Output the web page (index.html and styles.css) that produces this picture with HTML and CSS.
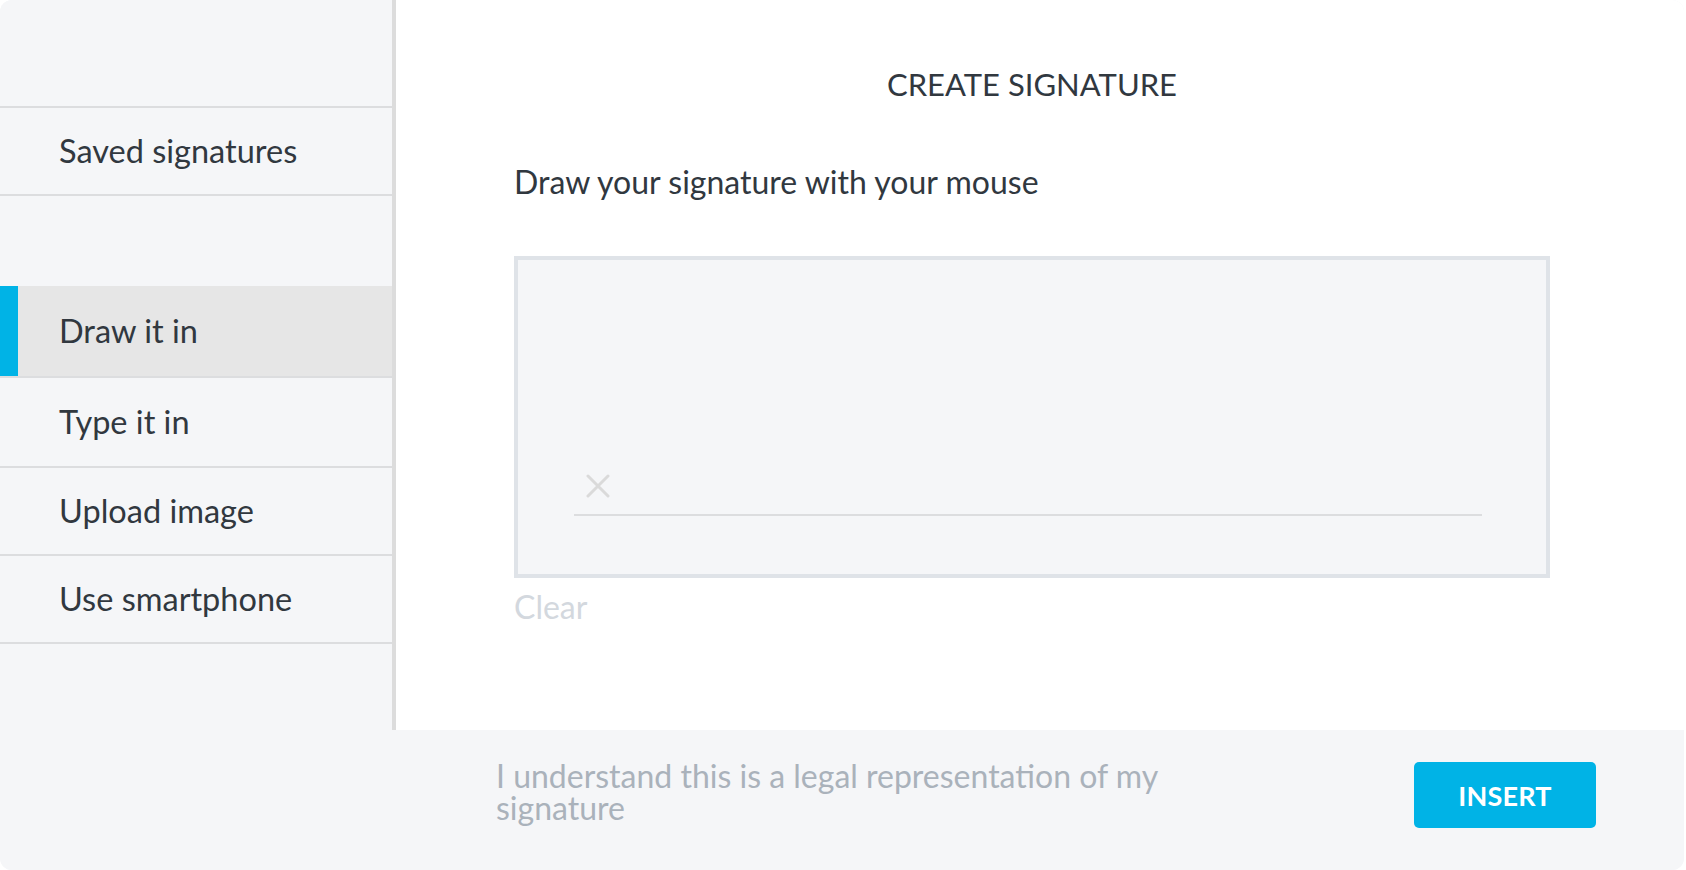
FILE: index.html
```html
<!DOCTYPE html>
<html lang="en">
<head>
<meta charset="utf-8">
<title>Create signature</title>
<link rel="stylesheet" href="styles.css">
</head>
<body>
<div class="card">
  <div class="content">
    <nav class="sidebar">
      <div class="side-head"></div>
      <div class="side-item">Saved signatures</div>
      <div class="side-gap"></div>
      <div class="side-item side-item--active">Draw it in</div>
      <div class="side-item side-item--mid">Type it in</div>
      <div class="side-item">Upload image</div>
      <div class="side-item">Use smartphone</div>
    </nav>
    <main class="main">
      <h1 class="title">CREATE SIGNATURE</h1>
      <p class="hint">Draw your signature with your mouse</p>
      <div class="pad">
        <div class="sig-line">
          <svg class="sig-x" width="24" height="24" viewBox="0 0 24 24" aria-hidden="true">
            <path d="M2 2 L22 22 M22 2 L2 22" stroke="#dadada" stroke-width="3" stroke-linecap="round" fill="none"/>
          </svg>
        </div>
      </div>
      <div class="clear">Clear</div>
    </main>
  </div>
  <footer class="footer">
    <p class="legal">I understand this is a legal representation of my signature</p>
    <button class="insert" type="button">INSERT</button>
  </footer>
</div>
</body>
</html>
```

FILE: styles.css
```css
* { box-sizing: border-box; }

html, body {
  margin: 0;
  padding: 0;
  background: #ffffff;
}

body {
  font-family: "Lato", "Open Sans", sans-serif;
  color: #31383f;
}

.card {
  width: 1684px;
  height: 870px;
  border-radius: 12px;
  overflow: hidden;
  display: grid;
  grid-template-rows: 730px 140px;
  background: #f5f6f8;
}

.content {
  display: flex;
  min-height: 0;
}

.sidebar {
  width: 396px;
  flex: 0 0 396px;
  background: #f5f6f8;
  border-right: 4px solid #dcdcdc;
  display: flex;
  flex-direction: column;
}

.side-head {
  height: 108px;
  border-bottom: 2px solid #dcdddf;
}

.side-gap {
  height: 90px;
}

.side-item {
  height: 88px;
  display: flex;
  align-items: center;
  padding-left: 59px;
  border-bottom: 2px solid #dcdddf;
  font-size: 32.5px;
  line-height: 40px;
  color: #31383f;
}

.side-item--active {
  height: 92px;
  background: #e6e6e6;
  box-shadow: inset 18px 0 0 #00b3e6;
}

.side-item--mid {
  height: 90px;
}

.main {
  flex: 1;
  background: #ffffff;
  padding-left: 118px;
  display: flex;
  flex-direction: column;
}

.title {
  width: 1036px;
  margin: 64px 0 0;
  font-size: 31px;
  line-height: 40px;
  font-weight: 400;
  text-align: center;
  color: #31383f;
}

.hint {
  margin: 58px 0 0;
  font-size: 32px;
  line-height: 40px;
  color: #31383f;
}

.pad {
  width: 1036px;
  height: 322px;
  margin-top: 54px;
  border: 4px solid #dfe3e8;
  background: #f5f6f8;
  display: flex;
  flex-direction: column;
  justify-content: flex-end;
  padding: 0 64px 58px 56px;
}

.sig-line {
  border-bottom: 2px solid #dcdddf;
  padding: 0 0 16px 12px;
  display: flex;
}

.sig-x {
  display: block;
}

.clear {
  margin-top: 9px;
  font-size: 32px;
  line-height: 40px;
  color: #d3d8de;
}

.footer {
  background: #f5f6f8;
  display: flex;
  align-items: flex-start;
  padding: 30px 88px 0 496px;
}

.legal {
  margin: 0;
  width: 720px;
  font-size: 32px;
  line-height: 32px;
  color: #aab2bb;
}

.insert {
  margin-left: auto;
  margin-top: 2px;
  width: 182px;
  height: 66px;
  border: none;
  border-radius: 5px;
  background: #00b3e6;
  color: #ffffff;
  font-family: "Lato", "Open Sans", sans-serif;
  font-size: 27px;
  font-weight: 700;
  letter-spacing: 0.2px;
}
```
